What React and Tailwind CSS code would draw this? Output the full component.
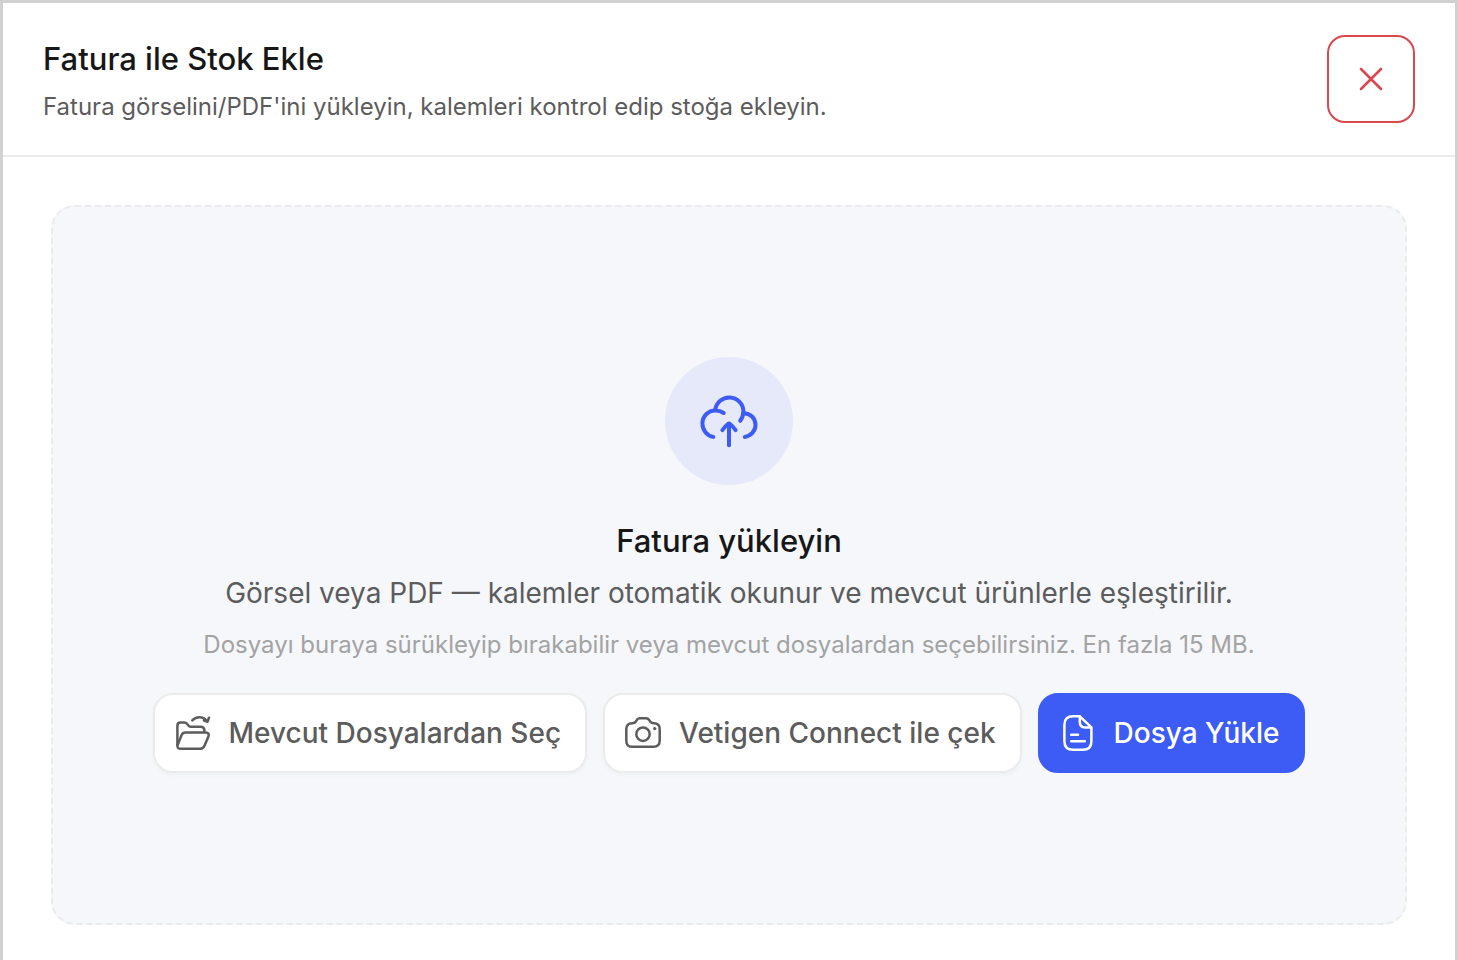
import clsx from 'clsx';

function CloseIcon() {
  return (
    <svg className="size-10" viewBox="0 0 40 40" fill="none" stroke="currentColor" strokeWidth="2.6" strokeLinecap="round" aria-hidden="true">
      <path d="M10 10 30 30M30 10 10 30" />
    </svg>
  );
}

function CloudUploadIcon() {
  return (
    <svg className="size-16" viewBox="0 0 64 64" fill="none" stroke="currentColor" strokeWidth="4" strokeLinecap="round" strokeLinejoin="round" aria-hidden="true">
      <path d="M16.3 47.9C9.8 46.6 5.4 41 5.4 34.6C5.4 27.2 11.2 21.5 18.5 21.5C21.6 21.5 24.4 22.4 26.7 24" />
      <path d="M18.3 20.9A14.1 14.1 0 0 1 46.4 22C46.4 25.8 45.4 29 43.2 31.8" />
      <path d="M46.6 24.2C53.3 24.2 58.5 29.2 58.5 36C58.5 42 53.7 47 47.8 47.9" />
      <path d="M32 56.2V34.5" />
      <path d="M25.4 41.1C27.2 38.6 28.8 36.7 30.7 35.2C31.5 34.6 32.5 34.6 33.3 35.2C35.2 36.7 36.8 38.6 38.6 41.1" />
    </svg>
  );
}

function FolderIcon() {
  return (
    <svg className="size-10 shrink-0" viewBox="0 0 40 40" fill="none" stroke="currentColor" strokeWidth="2.5" strokeLinecap="round" strokeLinejoin="round" aria-hidden="true">
      <path d="M4.4 32V12.5C4.4 10.5 5.7 9.4 7.6 9.4H11.2C12.5 9.4 13.3 9.8 14 10.8L15.4 12.6C16 13.4 16.6 13.7 17.6 13.7H27.6C30 13.7 31.2 14.9 31.4 17.2V19" />
      <path d="M12.4 19.4H32.7C35.3 19.4 36.4 21 35.4 23.4L31.5 32.8C30.6 35 29.6 35.7 27.4 35.7H7.4C4.8 35.7 3.8 34.2 4.7 31.8L8.6 22.1C9.4 20.1 10.4 19.4 12.4 19.4Z" />
      <path d="M19.3 7.4C23.3 3.1 30.6 3.1 34 8.4M36 4.7 34.6 8.7 30.9 7.5" />
    </svg>
  );
}

function CameraIcon() {
  return (
    <svg className="size-10 shrink-0" viewBox="0 0 40 40" fill="none" stroke="currentColor" strokeWidth="2.5" strokeLinecap="round" strokeLinejoin="round" aria-hidden="true">
      <path d="M9.2 10.3C11.3 10.3 12.6 9.4 13.5 7.5C14.3 5.9 15.4 5.3 17.1 5.3H22.9C24.6 5.3 25.7 5.9 26.5 7.5C27.4 9.4 28.7 10.3 30.8 10.3C34.9 10.3 36.7 12.4 36.7 16.2V27.5C36.7 31.8 34.7 33.8 30.4 33.8H9.6C5.3 33.8 3.3 31.8 3.3 27.5V16.2C3.3 12.4 5.1 10.3 9.2 10.3Z" />
      <circle cx="20" cy="21.2" r="6.7" />
      <circle cx="31.7" cy="15.6" r="1.7" fill="currentColor" stroke="none" />
    </svg>
  );
}

function FileIcon() {
  return (
    <svg className="size-10 shrink-0" viewBox="0 0 40 40" fill="none" stroke="currentColor" strokeWidth="2.5" strokeLinecap="round" strokeLinejoin="round" aria-hidden="true">
      <path d="M21.8 3.3H15.2C9.4 3.3 6.4 6 6.4 11.8V28.2C6.4 34 9.4 36.7 15.2 36.7H24.8C30.6 36.7 33.4 34 33.4 28.2V14.4Z" />
      <path d="M21.8 3.6V9C21.8 12.8 23.4 14.4 27.2 14.4H33" />
      <path d="M13.2 21.7H20M13.2 28.3H26.8" />
    </svg>
  );
}

const actions = [
  { label: 'Mevcut Dosyalardan Seç', icon: FolderIcon },
  { label: 'Vetigen Connect ile çek', icon: CameraIcon },
  { label: 'Dosya Yükle', icon: FileIcon, primary: true },
];

function ActionButton({ label, icon: Icon, primary }) {
  return (
    <button
      type="button"
      className={clsx(
        'flex h-20 items-center gap-4 rounded-[20px] border-2 pr-6 pl-[18px] text-[28px] leading-10 font-medium whitespace-nowrap',
        primary
          ? 'border-[#3d5cf5] bg-[#3d5cf5] text-white'
          : 'border-[#ebebeb] bg-white text-[#5c5c5c] shadow-[0_2px_4px_rgba(10,13,20,0.03)]'
      )}
    >
      <Icon />
      {label}
    </button>
  );
}

function UploadArea() {
  return (
    <section className="flex min-h-[720px] flex-col items-center justify-center rounded-3xl border-2 border-dashed border-[#ebebeb] bg-[#f5f7fb] px-8 text-center">
      <div className="flex size-32 items-center justify-center rounded-full bg-[#e5e9fa] text-[#3d5cf5]">
        <CloudUploadIcon />
      </div>
      <h2 className="mt-8 text-[31px] leading-12 font-medium text-[#171717]">Fatura yükleyin</h2>
      <p className="mt-2 text-[28px] leading-10 text-[#5c5c5c]">
        Görsel veya PDF — kalemler otomatik okunur ve mevcut ürünlerle eşleştirilir.
      </p>
      <p className="mt-4 text-2xl leading-8 text-[#a3a3a3]">
        Dosyayı buraya sürükleyip bırakabilir veya mevcut dosyalardan seçebilirsiniz. En fazla 15 MB.
      </p>
      <div className="mt-8 flex flex-wrap justify-center gap-4">
        {actions.map(action => (
          <ActionButton key={action.label} {...action} />
        ))}
      </div>
    </section>
  );
}

export default function App() {
  return (
    <div className="min-h-screen border-x-[3px] border-t-[3px] border-[#d1d1d1] bg-white font-['Inter',sans-serif]">
      <header className="flex items-center justify-between border-b-2 border-[#ebebeb] px-10 py-8">
        <div>
          <h1 className="text-[31px] leading-12 font-medium text-[#171717]">Fatura ile Stok Ekle</h1>
          <p className="mt-2 text-2xl leading-8 text-[#5c5c5c]">
            Fatura görselini/PDF'ini yükleyin, kalemleri kontrol edip stoğa ekleyin.
          </p>
        </div>
        <button
          type="button"
          aria-label="Kapat"
          className="flex size-[88px] shrink-0 items-center justify-center rounded-[18px] border-2 border-[#d9484f] text-[#d9484f]"
        >
          <CloseIcon />
        </button>
      </header>
      <main className="px-12 pt-12 pb-8">
        <UploadArea />
      </main>
    </div>
  );
}
